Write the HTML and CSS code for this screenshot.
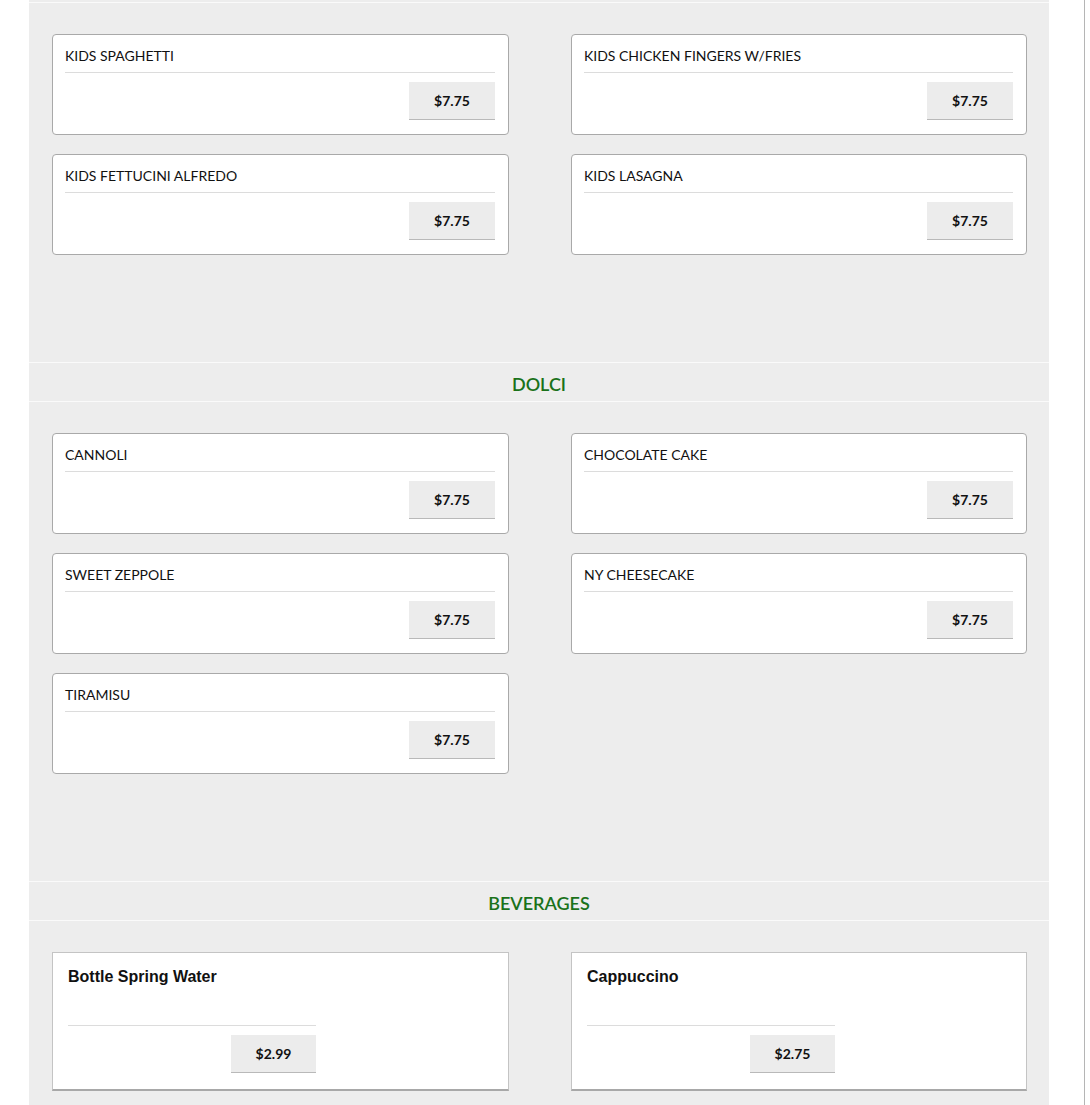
FILE: index.html
```html
<!DOCTYPE html>
<html>
<head>
<meta charset="utf-8">
<link rel="stylesheet" href="styles.css">
</head>
<body>
<div class="page">
  <div class="panel">
    <div class="prev-end"></div>
    <div class="grid">
      <div class="card"><div class="title">KIDS SPAGHETTI</div><div class="foot"><span class="price">$7.75</span></div></div>
      <div class="card"><div class="title">KIDS CHICKEN FINGERS W/FRIES</div><div class="foot"><span class="price">$7.75</span></div></div>
      <div class="card"><div class="title">KIDS FETTUCINI ALFREDO</div><div class="foot"><span class="price">$7.75</span></div></div>
      <div class="card"><div class="title">KIDS LASAGNA</div><div class="foot"><span class="price">$7.75</span></div></div>
    </div>
    <div class="section-head">DOLCI</div>
    <div class="grid">
      <div class="card"><div class="title">CANNOLI</div><div class="foot"><span class="price">$7.75</span></div></div>
      <div class="card"><div class="title">CHOCOLATE CAKE</div><div class="foot"><span class="price">$7.75</span></div></div>
      <div class="card"><div class="title">SWEET ZEPPOLE</div><div class="foot"><span class="price">$7.75</span></div></div>
      <div class="card"><div class="title">NY CHEESECAKE</div><div class="foot"><span class="price">$7.75</span></div></div>
      <div class="card"><div class="title">TIRAMISU</div><div class="foot"><span class="price">$7.75</span></div></div>
    </div>
    <div class="section-head">BEVERAGES</div>
    <div class="grid bev-grid">
      <div class="bev"><div class="bev-title">Bottle Spring Water</div><div class="bev-foot"><span class="price">$2.99</span></div></div>
      <div class="bev"><div class="bev-title">Cappuccino</div><div class="bev-foot"><span class="price">$2.75</span></div></div>
    </div>
  </div>
</div>
</body>
</html>
```

FILE: styles.css
```css
html, body {
  margin: 0;
  padding: 0;
  background: #ffffff;
}
body {
  font-family: "Lato", "Open Sans", sans-serif;
  color: #111;
}
.page {
  width: 1085px;
  min-height: 1105px;
  border-right: 1px solid #b5b5b5;
  box-sizing: border-box;
  padding-left: 29px;
  overflow: hidden;
}
.panel {
  width: 1020px;
  background: #ededed;
  min-height: 1105px;
}
.prev-end {
  height: 2px;
  border-bottom: 1px solid #fafafa;
}
.grid {
  display: grid;
  grid-template-columns: 457px 456px;
  column-gap: 62px;
  row-gap: 19px;
  padding: 31px 22px 107px 23px;
  align-items: start;
}
.card {
  background: #fff;
  border: 1px solid #a9a9a9;
  border-radius: 4px;
  padding: 0 13px 13px 12px;
  height: 101px;
  box-sizing: border-box;
}
.title {
  font-size: 14px;
  line-height: 18px;
  padding: 12px 0 7px;
  border-bottom: 1px solid #dcdcdc;
  white-space: nowrap;
}
.foot {
  display: flex;
  justify-content: flex-end;
  padding-top: 9px;
}
.price {
  display: block;
  width: 86px;
  height: 38px;
  box-sizing: border-box;
  background: #ececec;
  border-bottom: 1px solid #b9b9b9;
  text-align: center;
  line-height: 37px;
  font-weight: 700;
  font-size: 14px;
}
.section-head {
  height: 38px;
  border-top: 1px solid #fafafa;
  border-bottom: 1px solid #fafafa;
  text-align: center;
  line-height: 42px;
  color: #1a721a;
  font-size: 18px;
  font-weight: 600;
}
.bev-grid {
  padding-bottom: 20px;
}
.bev {
  background: #fff;
  border: 1px solid #c4c4c4;
  border-bottom: 2px solid #a8a8a8;
  padding: 14px 15px 16px;
  height: 139px;
  box-sizing: border-box;
}
.bev-title {
  font-family: "Liberation Sans", Arial, sans-serif;
  font-weight: 700;
  font-size: 16px;
  line-height: 20px;
  height: 58px;
}
.bev-foot {
  width: 248px;
  border-top: 1px solid #dcdcdc;
  display: flex;
  justify-content: flex-end;
  padding-top: 9px;
}
.bev-foot .price {
  width: 85px;
}
```
